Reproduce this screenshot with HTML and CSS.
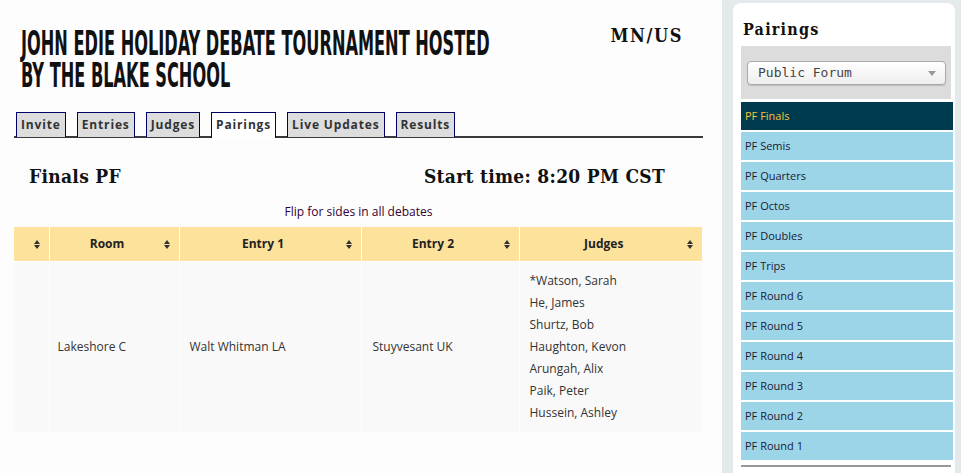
FILE: index.html
```html
<!DOCTYPE html>
<html>
<head>
<meta charset="utf-8">
<link rel="stylesheet" href="styles.css">
</head>
<body>
<div class="page">
  <main class="main">
    <header class="head">
      <h1 class="title"><span class="title-inner">JOHN EDIE HOLIDAY DEBATE TOURNAMENT HOSTED<br>BY THE BLAKE SCHOOL</span></h1>
      <div class="loc">MN/US</div>
    </header>
    <nav class="tabs">
      <span class="tab">Invite</span>
      <span class="tab">Entries</span>
      <span class="tab">Judges</span>
      <span class="tab active">Pairings</span>
      <span class="tab">Live Updates</span>
      <span class="tab">Results</span>
    </nav>
    <div class="round-head">
      <h2 class="round-title">Finals PF</h2>
      <h2 class="round-time">Start time: 8:20 PM CST</h2>
    </div>
    <p class="note">Flip for sides in all debates</p>
    <table class="pairings">
      <thead>
        <tr>
          <th class="c0"><span class="sort"></span></th>
          <th class="c1">Room<span class="sort"></span></th>
          <th class="c2">Entry 1<span class="sort"></span></th>
          <th class="c3">Entry 2<span class="sort"></span></th>
          <th class="c4">Judges<span class="sort"></span></th>
        </tr>
      </thead>
      <tbody>
        <tr>
          <td class="c0"></td>
          <td class="c1 room">Lakeshore C</td>
          <td class="c2">Walt Whitman LA</td>
          <td class="c3">Stuyvesant UK</td>
          <td class="c4">
            <div class="judge">*Watson, Sarah</div>
            <div class="judge">He, James</div>
            <div class="judge">Shurtz, Bob</div>
            <div class="judge">Haughton, Kevon</div>
            <div class="judge">Arungah, Alix</div>
            <div class="judge">Paik, Peter</div>
            <div class="judge">Hussein, Ashley</div>
          </td>
        </tr>
      </tbody>
    </table>
  </main>
  <aside class="side">
    <div class="card">
      <h3 class="side-title">Pairings</h3>
      <div class="select-box">
        <div class="select">Public Forum<span class="caret"></span></div>
      </div>
      <ul class="rounds">
        <li class="round current">PF Finals</li>
        <li class="round">PF Semis</li>
        <li class="round">PF Quarters</li>
        <li class="round">PF Octos</li>
        <li class="round">PF Doubles</li>
        <li class="round">PF Trips</li>
        <li class="round">PF Round 6</li>
        <li class="round">PF Round 5</li>
        <li class="round">PF Round 4</li>
        <li class="round">PF Round 3</li>
        <li class="round">PF Round 2</li>
        <li class="round">PF Round 1</li>
      </ul>
      <div class="rule"></div>
    </div>
  </aside>
</div>
</body>
</html>
```
FILE: styles.css
```css
* { box-sizing: border-box; }
html, body { margin: 0; padding: 0; }
body {
  background: #fdfdfd;
  font-family: "Open Sans", "DejaVu Sans", sans-serif;
  color: #333;
  overflow: hidden;
}
.page {
  display: flex;
  width: 961px;
  height: 473px;
}
.main {
  width: 722px;
  padding: 0 19px 0 14px;
}
.head {
  display: flex;
  align-items: flex-start;
  height: 112px;
  padding: 27px 0 0 7px;
}
.title {
  flex: none;
  width: 480px;
  height: 64px;
  margin: 0;
  font-family: "DejaVu Sans", sans-serif;
  font-stretch: condensed;
  font-weight: bold;
  font-size: 27px;
  line-height: 25.6px;
  color: #111;
  white-space: nowrap;
}
.title-inner {
  display: inline-block;
  vertical-align: top;
  transform-origin: 0 0;
  transform: scale(0.666, 1.25);
}
.loc {
  margin-left: auto;
  margin-right: 20px;
  margin-top: -1px;
  font-family: "DejaVu Serif", serif;
  font-stretch: condensed;
  font-weight: bold;
  font-size: 18px;
  line-height: 20px;
  letter-spacing: 1.6px;
  color: #111;
}
.tabs {
  display: flex;
  gap: 11px;
  height: 26px;
  padding-left: 2px;
  border-bottom: 2px solid #3a3a3a;
  align-items: flex-end;
}
.tab {
  display: block;
  height: 25px;
  padding: 0 4px;
  margin-bottom: -1px;
  background: #dddddd;
  border: 1px solid #000066;
  border-bottom: none;
  font-size: 12px;
  font-weight: bold;
  letter-spacing: 0.85px;
  line-height: 23px;
  color: #333;
}
.tab.active {
  background: #fff;
  height: 26px;
  margin-bottom: -2px;
}
.round-head {
  display: flex;
  justify-content: space-between;
  padding: 26px 38px 0 15px;
}
.round-title, .round-time {
  margin: 0;
  font-family: "DejaVu Serif", serif;
  font-stretch: condensed;
  font-weight: bold;
  font-size: 19px;
  letter-spacing: 0.3px;
  color: #111;
  line-height: 24px;
}
.note {
  margin: 16px 0 0;
  text-align: center;
  font-size: 12px;
  line-height: 16px;
  color: #330033;
}
.pairings {
  margin-top: 7px;
  width: 688px;
  border-collapse: collapse;
  table-layout: fixed;
  font-size: 12px;
}
.pairings th {
  position: relative;
  height: 34px;
  background: #fde29b;
  font-weight: bold;
  color: #222;
  text-align: center;
  border-left: 1px solid #fff;
  padding: 0 14px 0 0;
}
.pairings th:first-child, .pairings td:first-child { border-left: none; }
.pairings td {
  background: #f9f9f9;
  border-left: 1px solid #fff;
  border-top: 1px solid #fff;
  padding: 8px 10px;
  color: #333;
  vertical-align: middle;
}
.pairings .c0 { width: 35px; }
.pairings .c1 { width: 130px; }
.pairings .c2 { width: 182px; }
.pairings .c3 { width: 158px; }
.pairings .c4 { width: 183px; }
.pairings td.room { padding-left: 8px; }
.pairings td.c2 { padding-left: 10px; }
.pairings td.c3 { padding-left: 11px; }
.judge { line-height: 22px; }
.sort {
  position: absolute;
  right: 8px;
  top: 13px;
  width: 7px;
  height: 9px;
}
.sort::before, .sort::after {
  content: "";
  position: absolute;
  left: 0;
  border-left: 3.5px solid transparent;
  border-right: 3.5px solid transparent;
}
.sort::before { top: 0; border-bottom: 4px solid #333; }
.sort::after { bottom: 0; border-top: 4px solid #333; }
.side {
  width: 239px;
  background: #e4e9ec;
  padding: 3px 6px 0 11px;
}
.card {
  background: #fff;
  border-radius: 8px 8px 0 0;
  height: 100%;
  padding: 16px 2px 0 8px;
}
.side-title {
  margin: 0;
  padding-left: 2px;
  font-family: "DejaVu Serif", serif;
  font-stretch: condensed;
  font-weight: bold;
  font-size: 16px;
  letter-spacing: 1.2px;
  line-height: 22px;
  color: #111;
}
.select-box {
  margin-top: 5px;
  margin-right: 2px;
  height: 53px;
  background: #dcdcdc;
  padding: 15px 5px 0 6px;
}
.select {
  position: relative;
  height: 24px;
  border: 1px solid #aaa;
  border-radius: 4px;
  background: linear-gradient(#ffffff, #eeeeee);
  font-family: "DejaVu Sans Mono", monospace;
  font-size: 13px;
  line-height: 22px;
  padding-left: 10px;
  color: #444;
  box-shadow: 0 1px 1px rgba(0,0,0,0.15);
}
.caret {
  position: absolute;
  right: 9px;
  top: 9px;
  border-left: 4px solid transparent;
  border-right: 4px solid transparent;
  border-top: 5px solid #999;
}
.rounds {
  list-style: none;
  margin: 3px 0 0;
  padding: 0;
}
.round {
  height: 28px;
  margin-bottom: 2px;
  background: #9dd5e8;
  font-size: 11px;
  line-height: 28px;
  padding-left: 4px;
  color: #1a1a33;
}
.round.current {
  background: #003a4f;
  color: #f6c33c;
}
.rule {
  margin-top: 5px;
  margin-right: 2px;
  height: 1px;
  border-top: 2px solid #999;
}
```
